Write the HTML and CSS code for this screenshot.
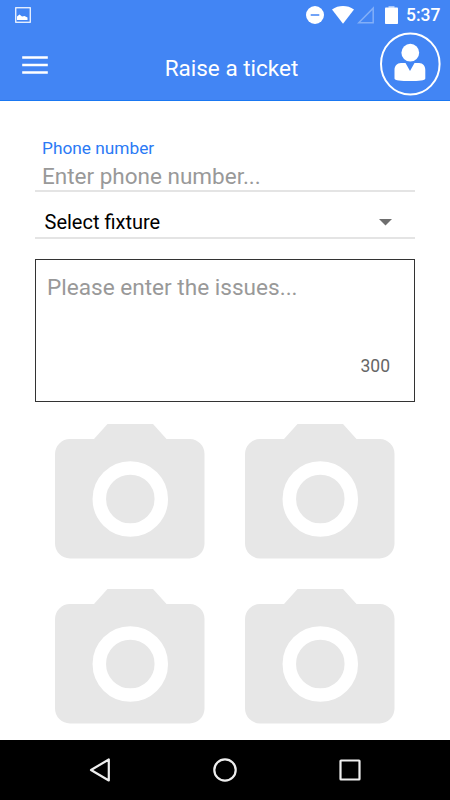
FILE: index.html
```html
<!DOCTYPE html>
<html lang="en">
<head>
    <meta charset="UTF-8">
    <meta name="viewport" content="width=device-width, initial-scale=1.0">
    <title>Raise a ticket</title>
    <link rel="stylesheet" href="styles.css">
</head>
<body>
    <!-- camera shape shared by the photo slots -->
    <svg class="sprite" width="0" height="0">
        <symbol id="camera" viewBox="0 0 150 135">
            <path fill="#e7e7e7" d="M15 15H39L52.5 0H98L111.500 15H135A15 15 0 0 1 149.500 30V119.500A15 15 0 0 1 134.500 134.500H15A15 15 0 0 1 0 119.500V30A15 15 0 0 1 15 15Z"/>
            <circle cx="75.300" cy="75" r="31" fill="none" stroke="#fff" stroke-width="13.500"/>
        </symbol>
    </svg>

    <header class="header">
        <div class="status-bar">
            <svg class="status-picture" width="16" height="16" viewBox="0 0 16 16">
                <rect x="0.750" y="0.750" width="14.500" height="14.500" fill="none" stroke="#fff" stroke-width="1.200"/>
                <path fill="#fff" d="M2 13V9.500L4.500 7.500L7 9.500L9.500 9L12.500 10.500V13Z"/>
            </svg>
            <svg class="status-dnd" width="18" height="18" viewBox="0 0 18 18">
                <circle cx="9" cy="9" r="9" fill="#fff"/>
                <path stroke="#4285f4" stroke-width="1.500" d="M4.700 9H13.300"/>
            </svg>
            <svg class="status-wifi" width="22" height="18" viewBox="0 0 22 18">
                <path fill="#fff" d="M11 17.700L0 3.500C6.500 -1.100 15.500 -1.100 22 3.500Z"/>
            </svg>
            <svg class="status-signal" width="18" height="18" viewBox="0 0 18 18">
                <path fill="none" stroke="#82aff8" stroke-width="1.500" d="M16.200 2.200V16.800H1.800Z"/>
            </svg>
            <svg class="status-battery" width="13" height="18" viewBox="0 0 13 18">
                <path fill="#a9c8fb" d="M3.500 0H9.500V2H3.500Z"/>
                <rect y="1.500" width="13" height="16.500" rx="0.800" fill="#fff"/>
            </svg>
            <span class="status-time">5:37</span>
        </div>
        <div class="toolbar">
            <svg class="menu" width="26" height="20" viewBox="0 0 26 20">
                <path stroke="#fff" stroke-width="2.500" d="M0.200 2.400H25.800M0.200 10H25.800M0.200 17.500H25.800"/>
            </svg>
            <h1 class="title">Raise a ticket</h1>
            <svg class="avatar" width="62" height="64" viewBox="0 0 62 64">
                <ellipse cx="31.300" cy="32" rx="29.300" ry="30.600" fill="none" stroke="#fff" stroke-width="2"/>
                <circle cx="31.300" cy="20.700" r="8.900" fill="#fff"/>
                <path fill="#fff" d="M22 31H26.500L31 39L35.500 31H40C44 31 46.300 34 46.300 38V46.500C46.300 48.500 40 49 31 49S15.500 48.500 15.500 46.500V38C15.500 34 18 31 22 31Z"/>
            </svg>
        </div>
    </header>

    <main class="content">
        <div class="field phone">
            <div class="field-label">Phone number</div>
            <div class="field-input">Enter phone number...</div>
        </div>
        <div class="field fixture">
            <span>Select fixture</span>
            <svg width="13" height="7" viewBox="0 0 13 7">
                <path fill="#6e6e6e" d="M0 0H13L6.500 6.500Z"/>
            </svg>
        </div>
        <div class="issues">
            <div class="issues-text">Please enter the issues...</div>
            <div class="issues-count">300</div>
        </div>
        <div class="photos">
            <svg width="150" height="135"><use href="#camera"/></svg>
            <svg width="150" height="135"><use href="#camera"/></svg>
            <svg width="150" height="135"><use href="#camera"/></svg>
            <svg width="150" height="135"><use href="#camera"/></svg>
        </div>
    </main>

    <nav class="nav-bar">
        <svg width="24" height="26" viewBox="0 0 24 26">
            <path fill="none" stroke="#eee" stroke-width="2.200" stroke-linejoin="round" d="M20.800 2.500V23.500L3 13Z"/>
        </svg>
        <svg width="24" height="24" viewBox="0 0 24 24">
            <circle cx="12" cy="12" r="10.700" fill="none" stroke="#eee" stroke-width="2.200"/>
        </svg>
        <svg width="24" height="24" viewBox="0 0 24 24">
            <rect x="2.500" y="2.500" width="19" height="19" rx="0.500" fill="none" stroke="#eee" stroke-width="2.200"/>
        </svg>
    </nav>
</body>
</html>
```

FILE: styles.css
```css
* {
    box-sizing: border-box;
}
body {
    font-family: Roboto, "Liberation Sans", sans-serif;
    margin: 0;
    height: 800px;
    display: flex;
    flex-direction: column;
    background-color: #fff;
    overflow: hidden;
}
svg {
    display: block;
    flex-shrink: 0;
}
.sprite {
    position: absolute;
}
.header {
    height: 101px;
    background-color: #4285f4;
    border-bottom: 1px solid #1a78f2;
    color: #fff;
}
.status-bar {
    height: 30px;
    display: flex;
    align-items: center;
    padding: 0 10px 0 14.500px;
}
.status-dnd {
    margin-left: auto;
}
.status-wifi {
    margin-left: 8px;
}
.status-signal {
    margin-left: 3px;
}
.status-battery {
    margin-left: 10px;
}
.status-time {
    width: 34px;
    margin-left: 8px;
    font-size: 17.500px;
    font-weight: 500;
    line-height: 32px;
    white-space: nowrap;
}
.toolbar {
    height: 70px;
    display: flex;
    align-items: center;
    padding: 0 9px 2px 22px;
}
.menu {
    margin-top: 2px;
}
.title {
    flex: 1;
    margin: 7px 0 0 36px;
    font-size: 22.500px;
    font-weight: 400;
    line-height: 28px;
    text-align: center;
}
.content {
    flex: 1;
    padding: 36px 35px 0;
}
.field {
    border-bottom: 2px solid #e4e4e4;
}
.phone {
    height: 55px;
    padding-left: 7px;
}
.field-label {
    font-size: 17.300px;
    line-height: 22px;
    color: #2b7af5;
}
.field-input {
    font-size: 22.500px;
    line-height: 34px;
    color: #999;
}
.fixture {
    height: 47px;
    display: flex;
    align-items: center;
    justify-content: space-between;
    padding: 15px 23px 0 9.500px;
    font-size: 20px;
    color: #000;
}
.issues {
    height: 143px;
    margin-top: 20px;
    padding: 13px 24px 0 11px;
    border: 1px solid #333;
}
.issues-text {
    font-size: 22.600px;
    line-height: 30px;
    color: #999;
}
.issues-count {
    margin-top: 51px;
    font-size: 17.500px;
    line-height: 24px;
    text-align: right;
    color: #666;
}
.photos {
    display: grid;
    grid-template-columns: 150px 150px;
    gap: 30px 40px;
    padding: 22px 0 0 20px;
}
.nav-bar {
    height: 60px;
    display: flex;
    align-items: center;
    justify-content: space-between;
    padding: 0 88px;
    background-color: #000;
}
```
